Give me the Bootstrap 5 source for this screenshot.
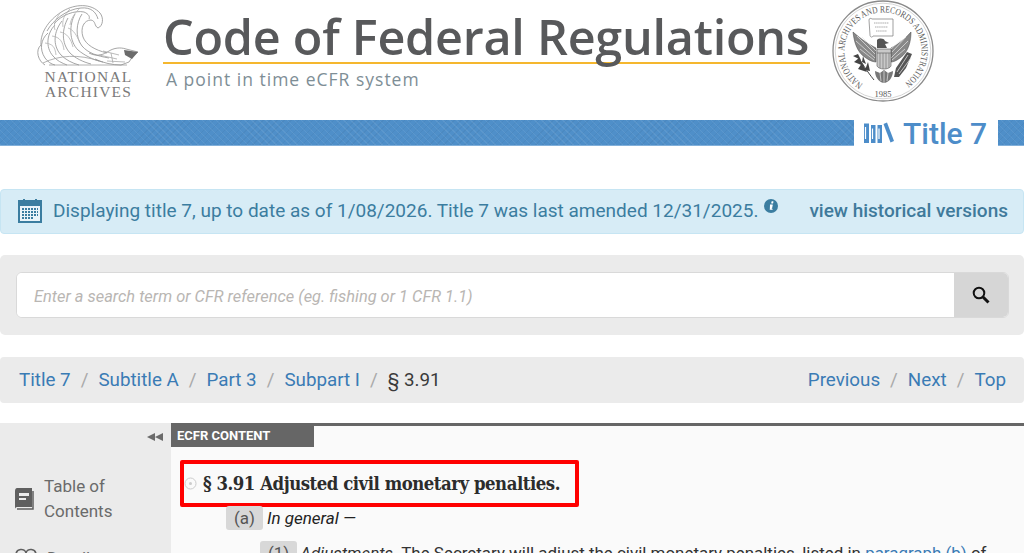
<!DOCTYPE html>
<html lang="en">
<head>
<meta charset="utf-8">
<title>eCFR :: 7 CFR 3.91</title>
<link href="https://cdn.jsdelivr.net/npm/bootstrap@5.3.0/dist/css/bootstrap.min.css" rel="stylesheet">
<style>
html,body{height:553px;overflow:hidden;background:#fff}
body{font-family:Roboto,"Liberation Sans",sans-serif;font-size:19px;color:#333}
.site-head{height:120px}
.nara-logo{width:102px;margin-left:37px;margin-top:3px;flex:none}
.nara-words{font-family:"Liberation Serif",serif;font-size:15.5px;line-height:14.5px;letter-spacing:1.2px;color:#7a7a7a;text-align:center;margin-top:3px;padding-left:1px}
.brand-box{margin-left:24px;width:647px;flex:none;padding-top:9px}
.brand-name{font-family:"Open Sans",sans-serif;font-weight:600;font-size:48.5px;line-height:54px;color:#58595b;white-space:nowrap;letter-spacing:-.25px;border-bottom:2px solid #f5b72e;height:55px}
.brand-sub{font-family:"Open Sans",sans-serif;font-size:17.5px;color:#7e8e96;line-height:24px;padding-top:3px;padding-left:3px;letter-spacing:1px}
.seal{width:104px;height:104px;margin-left:22px;flex:none}
.stripe{height:26px;margin-bottom:43px;background-color:#4f8fc9;background-image:repeating-linear-gradient(45deg,rgba(255,255,255,.07) 0 1px,transparent 1px 5px),repeating-linear-gradient(-45deg,rgba(0,0,0,.04) 0 1px,transparent 1px 5px);border-bottom:1px solid #82b0da}
.stripe-label{background:#fff;margin-left:854px;width:144px;height:26px;color:#4d8dc9;font-size:30px;line-height:28px;font-weight:500;white-space:nowrap;padding-left:10px;gap:9px}
.stripe-text{margin-top:2px}
.notice{height:45px;background:#d7ecf6;border:1px solid #c6e5f3;border-radius:4px;color:#3b7da0;font-size:19px;padding:0 15px 0 17px;margin-bottom:21px}
.notice a{color:#3f7a9b;font-weight:500;text-decoration:none}
.notice-cal{margin-top:-2px}
.notice-text{margin-left:11px;margin-top:-1px}
.notice-info{margin:-11px 0 0 6px}
.well-box{height:80px;background:#ebebeb;border-radius:5px;padding:17px 15px 17px 16px;margin-bottom:22px}
.search-line{height:46px;border-radius:6px;overflow:hidden;border:1px solid #d9d9d9;background:#fff}
.search-line .form-control{border:0;border-radius:0;height:44px;font-size:16.4px;font-style:italic;padding:8px 12px 6px 17px;box-shadow:none}
.search-line .form-control::placeholder{color:#b9b6b3;opacity:1}
.search-btn{width:54px;background:#d6d6d6;flex:none}
.crumbs{height:46px;background:#ebebeb;border-radius:4px;padding:0 18px 0 19px;margin-bottom:20px;font-size:18.8px}
.crumbs .breadcrumb{--bs-breadcrumb-divider-color:#a9a9a9;--bs-breadcrumb-item-active-color:#3a3a3a;--bs-breadcrumb-item-padding-x:10px}
.crumbs a{color:#3a7bb5;text-decoration:none}
.page-body{height:130px;border-top:3px solid #666}
.side-rail{width:171px;background:#ebebeb;margin-top:-3px;padding-top:3px;flex:none}
.side-collapse{text-align:right;padding-right:8px;height:15px;line-height:12px;margin-top:4px}
.side-item{color:#6a6a6a;font-size:17px;line-height:25px;padding-left:15px;gap:10px}
.side-toc{margin-top:29px}
.side-details{margin-top:22px}
.main-pane{background:#fafafa;min-width:0}
.tab-label{width:143px;height:21px;background:#666;color:#fff;font-size:13px;font-weight:700;line-height:19px;padding-left:6px}
.section-box{margin:13px 0 0 9px;width:399px;height:47px;border:4px solid #f00;border-radius:2px;gap:6px;white-space:nowrap}
.section-title{font-family:"DejaVu Serif Condensed","DejaVu Serif",serif;font-stretch:condensed;font-weight:700;font-size:18.4px;letter-spacing:-.47px;color:#2c2c2c;line-height:38px}
.para-mark{background:#d8d8d8;border-radius:3px;color:#555;padding:1px 8px;font-size:17px;line-height:22px}
.para-a{margin:-1px 0 0 55px;font-size:17px;line-height:24px;gap:4px;color:#222}
.para-1{margin:11px 0 0 89px;font-size:16.93px;line-height:24px;gap:3px;white-space:nowrap;color:#333}
.para-1 a{color:#3a7bb5;text-decoration:none}
</style>
</head>
<body>
<header class="site-head d-flex align-items-start">
  <div class="nara-logo">
    <svg width="102" height="64" viewBox="0 0 102 64" fill="none" stroke="#8f8f8f" stroke-width=".8" aria-label="National Archives eagle">
      <path d="M4 42C3 28 14 15 26 8C38 1 54 0 63 10C67 15 66 23 61 25C57 23 59 18 54 17C47 17 43 25 46 34C49 42 58 47 70 50"/>
      <path d="M10 28C16 17 30 6 44 5C54 4 59 9 61 16"/>
      <path d="M17 21C24 12 38 7 47 9C52 11 53 14 52 16"/>
      <path d="M4 42C-2 47 1 58 8 62M11 30C4 36 2 46 8 55C11 59 14 61 18 62"/>
      <path d="M18 22C10 30 8 44 16 53C20 58 25 60 30 62"/>
      <path d="M25 18C17 28 15 42 24 52C29 57 35 60 42 62"/>
      <path d="M31 15C25 26 24 40 33 50C38 55 46 59 54 61"/>
      <path d="M38 11C32 22 32 38 41 47C47 52 56 57 66 59"/>
      <path d="M45 11C39 20 38 34 45 43C51 50 60 53 72 55"/>
      <path d="M23 10C19 16 16 21 18 27M33 6C27 12 25 17 26 24M43 5C38 10 34 15 33 22" stroke="#b3b3b3"/>
      <path d="M8 40C16 41 18 44 19 52M15 33C23 34 26 39 27 47M23 29C30 30 34 36 36 44M31 25C37 27 40 33 43 40" stroke="#b3b3b3"/>
      <path d="M6 60C22 52 42 51 62 58M12 62H90" stroke="#a0a0a0"/>
      <path d="M52 50C60 54 66 52 72 48C77 45 83 44 89 46L101 49L96 53L92 59L84 62C76 62 66 60 58 56"/>
      <path d="M87 47L101 49L95 56L88 52Z" fill="#6b6b6b" stroke="none"/>
      <path d="M62 52L80 56M66 48L82 52M70 58L88 59M74 50L76 60" stroke="#aaa"/>
    </svg>
    <div class="nara-words">NATIONAL<br>ARCHIVES</div>
  </div>
  <div class="brand-box">
    <div class="brand-name">Code of Federal Regulations</div>
    <div class="brand-sub">A point in time eCFR system</div>
  </div>
  <svg class="seal" viewBox="0 0 104 104" aria-label="Seal of the National Archives and Records Administration">
    <circle cx="51" cy="51" r="50" fill="#fff" stroke="#8a8a8a" stroke-width="1.3"/>
    <circle cx="51" cy="51" r="47.800" fill="none" stroke="#c4c4c4" stroke-width=".7"/>
    <defs><path id="sealArc" d="M31 84A38.600 38.600 0 1 1 71 84"/></defs>
    <text font-family="Liberation Serif,serif" font-size="9.500" fill="#5a5a5a"><textPath href="#sealArc" textLength="198" lengthAdjust="spacingAndGlyphs">NATIONAL ARCHIVES AND RECORDS ADMINISTRATION</textPath></text>
    <path d="M37 20C37 18 39 18 40 19H61V36H41C40 38 38 37 38 35Z" fill="#fff" stroke="#777" stroke-width=".7"/>
    <path d="M42 23H57M43 27H56M44 31H55" stroke="#aaa" stroke-dasharray="1.500 .6"/>
    <path d="M45 40C47 38 52 38 53 41L57 43L53 44L55 48H45Z" fill="#555"/>
    <path d="M44 48C38 45 30 40 21 32C22 40 24 52 34 58C38 61 42 62 44 62Z" fill="#888" stroke="#444" stroke-width=".5"/>
    <path d="M59 48C65 45 72 40 79 32C79 40 77 52 68 58C64 61 61 62 59 62Z" fill="#888" stroke="#444" stroke-width=".5"/>
    <path d="M25 36L43 54M24 41L43 58M28 49L42 60M30 37L44 51M74 37L60 52M76 41L59 58M73 49L60 60M69 40L59 49" stroke="#e6e6e6" stroke-width=".7"/>
    <path d="M45 49H59V66C57 70 47 70 45 66Z" fill="#c9c9c9" stroke="#555" stroke-width=".6"/>
    <path d="M45 53H59" stroke="#555" stroke-width=".6"/>
    <path d="M48 53V68M51 53V69M54 53V69M57 53V68" stroke="#777" stroke-width=".7"/>
    <path d="M25 55C30 63 34 70 42 80" stroke="#333" stroke-width=".9" fill="none"/>
    <path d="M21 56L29 60L26 54ZM22 62L32 66L27 58ZM26 69L35 72L30 63ZM36 62L33 70L38 71ZM31 56L30 62L34 64Z" fill="#444"/>
    <path d="M80 54L75 52L64 68L62 77L67 77L74 68Z" fill="#555"/><path d="M76 55L65 72M79 58L67 74" stroke="#ddd" stroke-width=".8"/>
    <path d="M43 71C43 79 49 83 52 83C56 83 61 78 61 71L56 73L52 70L48 73Z" fill="#777"/><path d="M48 73L49 81M52 71V83M56 73L55 81" stroke="#e8e8e8" stroke-width=".7"/>
    <text x="51" y="97" text-anchor="middle" font-family="Liberation Serif,serif" font-size="8.500" fill="#5a5a5a">1985</text>
  </svg>
</header>
<div class="stripe">
  <div class="stripe-label d-flex align-items-center">
    <svg width="30" height="22" viewBox="0 0 30 22" fill="#4d8dc9" class="flex-shrink-0"><path d="M0 1.500H5V21H0ZM7 3H11.500V21H7ZM13.500 3H18V21H13.500Z"/><path d="M19.500 2L23 0.500L30 19L26.500 20.500Z"/><path d="M1.500 5V17M8.500 6.500V17M15 6.500V17" stroke="#fff" stroke-width="1.200"/></svg>
    <span class="stripe-text">Title 7</span>
  </div>
</div>
<div class="notice d-flex align-items-center">
  <svg class="notice-cal flex-shrink-0" width="24" height="25" viewBox="0 0 24 25"><path d="M1 3H23V24H1Z" fill="#eaf4f9" stroke="#3b7da0" stroke-width="2"/><path d="M1 3H23V8H1Z" fill="#3b7da0"/><path d="M6 1V5M18 1V5" stroke="#3b7da0" stroke-width="2"/><path d="M4 11H20M4 14H20M4 17H20M4 20H15" stroke="#3b7da0" stroke-width="2" stroke-dasharray="2 1"/></svg>
  <span class="notice-text">Displaying title 7, up to date as of 1/08/2026. Title 7 was last amended 12/31/2025.</span>
  <svg class="notice-info" width="14" height="14" viewBox="0 0 14 14"><circle cx="7" cy="7" r="7" fill="#3b7da0"/><path d="M6 5.800H8.500L7.600 10.500H8.500H5.800M7.800 2.600H9.200L8.900 4.200H7.500Z" fill="#fff" stroke="#fff" stroke-width=".5"/></svg>
  <a href="#" class="ms-auto">view historical versions</a>
</div>
<div class="well-box">
  <div class="search-line d-flex">
    <input class="form-control" type="text" placeholder="Enter a search term or CFR reference (eg. fishing or 1 CFR 1.1)" aria-label="Search">
    <div class="search-btn d-flex align-items-center justify-content-center">
      <svg width="18" height="18" viewBox="0 0 18 18" fill="none" stroke="#111"><circle cx="7" cy="7" r="5.300" stroke-width="2"/><path d="M11 11L16.500 16.500" stroke-width="3"/></svg>
    </div>
  </div>
</div>
<nav class="crumbs d-flex align-items-center justify-content-between" aria-label="breadcrumb">
  <ol class="breadcrumb mb-0">
    <li class="breadcrumb-item"><a href="#">Title 7</a></li>
    <li class="breadcrumb-item"><a href="#">Subtitle A</a></li>
    <li class="breadcrumb-item"><a href="#">Part 3</a></li>
    <li class="breadcrumb-item"><a href="#">Subpart I</a></li>
    <li class="breadcrumb-item active" aria-current="page">§ 3.91</li>
  </ol>
  <ol class="breadcrumb mb-0">
    <li class="breadcrumb-item"><a href="#">Previous</a></li>
    <li class="breadcrumb-item"><a href="#">Next</a></li>
    <li class="breadcrumb-item"><a href="#">Top</a></li>
  </ol>
</nav>
<div class="page-body d-flex">
  <aside class="side-rail">
    <div class="side-collapse"><svg width="16" height="8" viewBox="0 0 16 8" fill="#6a6a6a"><path d="M8 0V8L0 4ZM16 0V8L8 4Z"/></svg></div>
    <div class="side-item side-toc d-flex align-items-center">
      <svg width="19" height="22" viewBox="0 0 19 22" class="flex-shrink-0"><path d="M0 3C0 1 1 0 2 0H17V19H2C1 19 0 20 0 21Z" fill="#5f5f5f"/><path d="M2 21H18V3" fill="none" stroke="#5f5f5f" stroke-width="1.500"/><path d="M4 5H14V8H4ZM4 10H11V12H4Z" fill="#ebebeb"/></svg>
      <span>Table of<br>Contents</span>
    </div>
    <div class="side-item side-details d-flex align-items-start">
      <svg width="22" height="24" viewBox="0 0 22 24" class="flex-shrink-0"><path d="M1 9C1 2 10 2 11 7C12 2 21 2 21 9C21 15 13 18 11 21C9 18 1 15 1 9Z" fill="none" stroke="#5f5f5f" stroke-width="1.600"/></svg>
      <span>Details</span>
    </div>
  </aside>
  <main class="main-pane flex-grow-1">
    <div class="tab-label">ECFR CONTENT</div>
    <div class="section-box d-flex align-items-center">
      <svg width="13" height="13" viewBox="0 0 13 13" fill="none" class="flex-shrink-0"><circle cx="6.500" cy="6.500" r="5.500" stroke="#ccc"/><circle cx="6.500" cy="6.500" r="1.500" fill="#ccc"/></svg>
      <h1 class="section-title mb-0">§ 3.91 Adjusted civil monetary penalties.</h1>
    </div>
    <div class="para-a d-flex align-items-center"><span class="para-mark">(a)</span><em>In general —</em></div>
    <div class="para-1 d-flex align-items-center"><span class="para-mark">(1)</span><span><em>Adjustments.</em> The Secretary will adjust the civil monetary penalties, listed in <a href="#">paragraph (b)</a> of</span></div>
  </main>
</div>
<script src="https://cdn.jsdelivr.net/npm/bootstrap@5.3.0/dist/js/bootstrap.bundle.min.js"></script>
</body>
</html>
